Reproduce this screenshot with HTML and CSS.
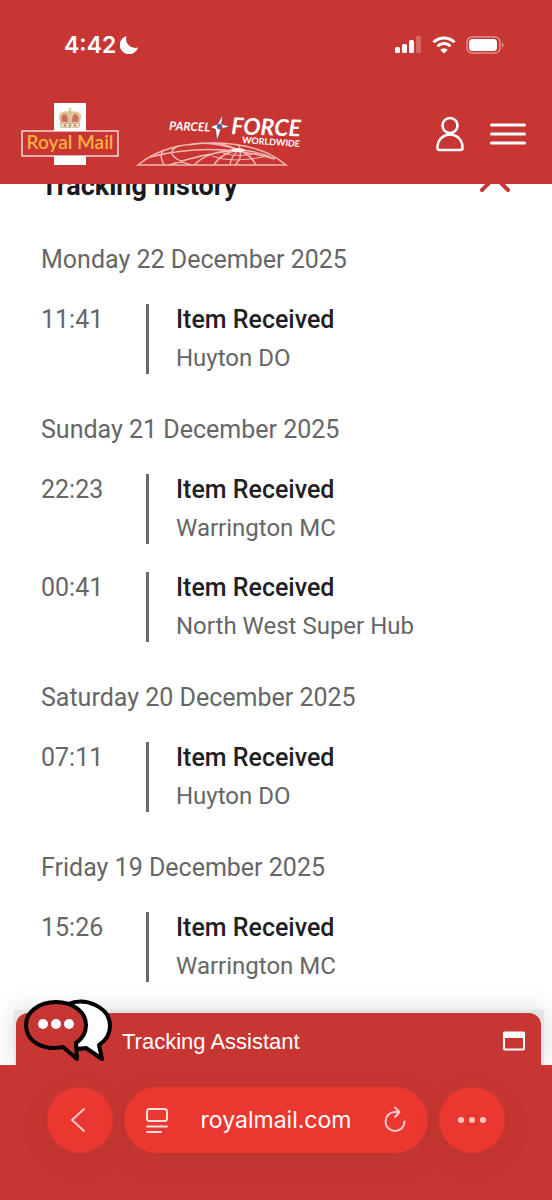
FILE: index.html
```html
<!DOCTYPE html>
<html lang="en">
<head>
    <meta charset="UTF-8">
    <meta name="viewport" content="width=device-width, initial-scale=1.0">
    <title>Royal Mail</title>
    <link rel="stylesheet" href="styles.css">
</head>
<body>
    <div class="status-bar">
        <div class="clock">
            <span>4:42</span>
            <svg width="18" height="18" viewBox="0 0 18 18"><path d="M6.500 0A9.300 9.300 0 1 0 18 11.500C11 13.500 4.500 8 6.500 0z" fill="#fff"/></svg>
        </div>
        <div class="indicators">
            <svg width="27" height="18" viewBox="0 0 27 18" fill="#fff">
                <rect x="0" y="11" width="5" height="6" rx="1.500"/>
                <rect x="7" y="8" width="5" height="9" rx="1.500"/>
                <rect x="14" y="4" width="5" height="13" rx="1.500"/>
                <rect x="21" y="0" width="5" height="17" rx="1.500" opacity=".25"/>
            </svg>
            <svg width="24" height="18" viewBox="0 0 24 18" fill="none" stroke="#fff" stroke-width="3">
                <path d="M1.500 6.200a15 15 0 0 1 21 0"/>
                <path d="M5.500 10.200a9.300 9.300 0 0 1 13 0"/>
                <path d="M12 17.500l-3.700-3.700a5.300 5.300 0 0 1 7.400 0z" fill="#fff" stroke="none"/>
            </svg>
            <svg width="38" height="18" viewBox="0 0 38 18">
                <rect x="1" y="1" width="33" height="16" rx="5" fill="none" stroke="#fff" stroke-width="1.500" opacity=".45"/>
                <rect x="3" y="3" width="28" height="12" rx="3.500" fill="#fff"/>
                <path d="M36 6.500c2 .8 2 4.200 0 5z" fill="#fff" opacity=".5"/>
            </svg>
        </div>
    </div>

    <header class="site-header">
        <a href="#" class="logo" aria-label="Home">
            <svg width="98" height="64" viewBox="0 0 98 64">
                <rect x="33" y="1" width="32" height="62" fill="#fff"/>
                <rect x="1" y="29" width="96" height="25" fill="#c73632" stroke="#fff" stroke-width="1.200"/>
                <g stroke="#c9a67a" stroke-width=".6">
                    <path d="M40 25L38.500 15q-.5-4 4-5 4-1 6.500 1 2.500-2 6.500-1 4.500 1 4 5L58 25z" fill="#e0cb9c"/>
                    <path d="M41 20q-2-8 3-8 3 0 3 8zM57 20q2-8-3-8-3 0-3 8z" fill="#cf6a63"/>
                    <path d="M40 21.500h18v4H40z" fill="#e9e2d3"/>
                    <path d="M49 5v20M47 7h4" fill="none"/>
                    <circle cx="49" cy="10" r="1.500" fill="#e7cf70"/>
                    <circle cx="49" cy="23.500" r="1" fill="#5c9a5a"/>
                    <circle cx="44" cy="23.500" r="1" fill="#c4524c"/>
                    <circle cx="54" cy="23.500" r="1" fill="#c4524c"/>
                </g>
                <text x="49" y="47" class="royal-mail">Royal Mail</text>
            </svg>
        </a>
        <a href="#" class="logo" aria-label="Parcelforce">
            <svg width="176" height="64" viewBox="0 0 176 64">
                <g transform="translate(0 9)">
                    <g fill="none" stroke="#f3b9b5" stroke-width="1.400">
                        <path d="M2 54Q28 32 76 32T150 54z"/>
                        <path d="M14 46Q76 30 139 48M27 39q-4 6 1 15M42 35q-12 6-1 13 6 4 14 6M58 54Q73 39 103 39M99 54q8-7 4-15M120 54q-4-9-17-15M139 48q-16-8-36-9M103 39Q73 29 53 34M103 39Q84 31 76 32M103 39Q105 34 101 34M103 39Q69 42 33 54M103 39q-18 3-25 15M103 39q-8 6-9 15"/>
                        <path d="M76 45q20 8 56 0M87 42q17 5 34 0" stroke-width="1"/>
                    </g>
                    <ellipse cx="102" cy="39" rx="7" ry="2" fill="#fff" opacity=".8"/>
                </g>
                <text x="33" y="28" transform="rotate(2 33 28)" class="parcel">PARCEL</text>
                <text x="95" y="32" transform="rotate(2 95 32)" class="force">FORCE</text>
                <text x="106" y="41" transform="rotate(4 106 41)" class="worldwide">WORLDWIDE</text>
                <g transform="translate(0 9)">
                    <path d="M87 3l-1.500 10 8.500 2.500-9 2.500-4 12-1.500-11.500L74 16l7.500-3z" fill="#fff" stroke="#7b2526" stroke-width=".6"/>
                    <circle cx="83.500" cy="15.500" r="2.800" fill="#4c68a3"/>
                    <path d="M83.500 15.500h3a3 3 0 0 1-3 3z" fill="#c73632"/>
                </g>
            </svg>
        </a>
        <div class="header-actions">
            <button type="button" aria-label="Account">
                <svg width="28" height="36" viewBox="0 0 28 36" fill="none" stroke="#fff" stroke-width="2.600">
                    <circle cx="14" cy="9.500" r="7.500"/>
                    <path d="M1.500 32c0-18 25-18 25 0 0 1.500-.5 2-2 2h-21c-1.500 0-2-.5-2-2z"/>
                </svg>
            </button>
            <button type="button" aria-label="Menu">
                <svg width="36" height="22" viewBox="0 0 36 22" stroke="#fff" stroke-width="3" stroke-linecap="round"><path d="M1.500 2h33M1.500 11h33M1.500 20h33"/></svg>
            </button>
        </div>
    </header>

    <main class="page">
        <div class="history-head">
            <h1>Tracking history</h1>
            <button type="button" aria-label="Collapse">
                <svg width="32" height="24" viewBox="0 0 32 24" fill="none" stroke="#c73632" stroke-width="4" stroke-linecap="round"><path d="M3 16L16 3l13 13"/></svg>
            </button>
        </div>

        <section class="day">
            <h2>Monday 22 December 2025</h2>
            <div class="event">
                <time>11:41</time>
                <div class="detail">
                    <strong>Item Received</strong>
                    <span>Huyton DO</span>
                </div>
            </div>
        </section>

        <section class="day">
            <h2>Sunday 21 December 2025</h2>
            <div class="event">
                <time>22:23</time>
                <div class="detail">
                    <strong>Item Received</strong>
                    <span>Warrington MC</span>
                </div>
            </div>
            <div class="event">
                <time>00:41</time>
                <div class="detail">
                    <strong>Item Received</strong>
                    <span>North West Super Hub</span>
                </div>
            </div>
        </section>

        <section class="day">
            <h2>Saturday 20 December 2025</h2>
            <div class="event">
                <time>07:11</time>
                <div class="detail">
                    <strong>Item Received</strong>
                    <span>Huyton DO</span>
                </div>
            </div>
        </section>

        <section class="day">
            <h2>Friday 19 December 2025</h2>
            <div class="event">
                <time>15:26</time>
                <div class="detail">
                    <strong>Item Received</strong>
                    <span>Warrington MC</span>
                </div>
            </div>
            <div class="event">
                <time></time>
                <div class="detail"></div>
            </div>
        </section>

        <div class="assistant">
            <button type="button" class="assistant-bar">
                <svg class="bubbles" width="88" height="64" viewBox="0 0 88 64" stroke="#000" stroke-width="4" stroke-linejoin="round">
                    <path d="M44 5C62-2 86 8 86 27c0 9-5 15-11 19l3 14-16-11c-5 1-12 1-18 0z" fill="#fff"/>
                    <path d="M32 3c17 0 30 10 30 23 0 8-4 14-10 18l1 16-14-12C18 52 2 42 2 26 2 13 15 3 32 3z" fill="#c73632"/>
                    <g fill="#fff" stroke="none"><circle cx="19" cy="25" r="5"/><circle cx="32" cy="25" r="5"/><circle cx="45" cy="25" r="5"/></g>
                </svg>
                <span>Tracking Assistant</span>
                <svg width="24" height="20" viewBox="0 0 24 20"><rect x="2" y="1.500" width="20" height="17" rx="1" fill="none" stroke="#fff" stroke-width="2"/><path d="M1 1h22v6H1z" fill="#fff"/></svg>
            </button>
        </div>
    </main>

    <nav class="browser-bar">
        <button type="button" class="round" aria-label="Back">
            <svg width="20" height="28" viewBox="0 0 20 28" fill="none" stroke="#ffc9cc" stroke-width="2" stroke-linecap="round"><path d="M14 3L2 14l12 11"/></svg>
        </button>
        <div class="address">
            <button type="button" aria-label="Page menu">
                <svg width="24" height="28" viewBox="0 0 24 28" fill="none" stroke="#ffdedf" stroke-width="2" stroke-linecap="round"><rect x="2" y="3" width="20" height="12" rx="2.500"/><path d="M2 20.500h20M2 26h14"/></svg>
            </button>
            <input type="text" value="royalmail.com" aria-label="Address">
            <button type="button" aria-label="Reload">
                <svg width="24" height="28" viewBox="0 0 24 28" fill="none" stroke="#ffc9cc" stroke-width="2" stroke-linecap="round" stroke-linejoin="round"><path d="M21.500 15.500A9.500 9.500 0 1 1 12 6h4.500M12 1.500L16.500 6 12 11"/></svg>
            </button>
        </div>
        <button type="button" class="round" aria-label="More">
            <svg width="28" height="6" viewBox="0 0 28 6" fill="#ffc9cc"><circle cx="3" cy="3" r="3"/><circle cx="14" cy="3" r="3"/><circle cx="25" cy="3" r="3"/></svg>
        </button>
    </nav>
</body>
</html>
```
FILE: styles.css
```css
* {
    box-sizing: border-box;
}
body {
    margin: 0;
    height: 100vh;
    display: flex;
    flex-direction: column;
    background-color: #fff;
    font-family: Roboto, "Noto Sans", sans-serif;
    color: #666;
}
svg {
    display: block;
    flex: none;
}
button {
    border: none;
    padding: 0;
    background: none;
    font: inherit;
    color: inherit;
    cursor: pointer;
}

/* phone status bar */
.status-bar {
    flex: none;
    display: flex;
    justify-content: space-between;
    align-items: center;
    height: 90px;
    padding: 0 48px 0 64px;
    background-color: #c73632;
    color: #fff;
}
.clock {
    display: flex;
    align-items: center;
    gap: 4px;
    font: 600 23px/28px Inter, sans-serif;
}
.indicators {
    display: flex;
    align-items: center;
    gap: 10px;
}

/* site header */
.site-header {
    flex: none;
    display: flex;
    align-items: center;
    gap: 17px;
    height: 94px;
    padding: 0 26px 6px 21px;
    background-color: #c73632;
}
.royal-mail {
    font: 600 19px Lato, sans-serif;
    fill: #fbb040;
    text-anchor: middle;
}
.parcel,
.force,
.worldwide {
    fill: #fff;
}
.parcel {
    font: italic bold 12px Lato, sans-serif;
}
.force {
    font: italic bold 23px Lato, sans-serif;
}
.worldwide {
    font: bold 9px Lato, sans-serif;
}
.header-actions {
    display: flex;
    align-items: center;
    gap: 26px;
    margin-left: auto;
}

/* tracking history */
.page {
    position: relative;
    flex: 1;
    min-height: 0;
    overflow: hidden;
    padding: 0 41px;
}
.history-head {
    display: flex;
    justify-content: space-between;
    align-items: center;
    height: 32px;
    margin-top: -14px;
}
h1 {
    margin: 0;
    font-size: 27px;
    line-height: 32px;
    font-weight: 700;
    color: #1a1a1e;
}
.day {
    display: flex;
    flex-direction: column;
    gap: 28px;
    margin-top: 40px;
    font-size: 25px;
    line-height: 32px;
}
.history-head + .day {
    margin-top: 42px;
}
h2 {
    margin: 0;
    font-size: 25px;
    line-height: 32px;
    font-weight: 400;
}
.event {
    display: grid;
    grid-template-columns: 105px 1fr;
}
.detail {
    display: flex;
    flex-direction: column;
    gap: 6px;
    min-height: 70px;
    padding-left: 27px;
    border-left: 3px solid #6b6b6b;
    font-size: 24px;
}
.detail strong {
    font-size: 25px;
    font-weight: 500;
    color: #1f1f24;
}

/* chat tab sits over the page */
.assistant {
    position: absolute;
    left: 14px;
    right: 8px;
    bottom: 0;
    padding: 3px 3px 0 2px;
    background-color: #e4e4e4;
    box-shadow: 0 0 24px rgba(0, 0, 0, 0.15);
}
.assistant-bar {
    display: flex;
    align-items: center;
    gap: 10px;
    width: 100%;
    height: 52px;
    padding: 4px 15px 0 8px;
    border-radius: 12px 12px 0 0;
    background-color: #c73632;
    color: #fff;
    font: 22px/28px "Liberation Sans", Arial, sans-serif;
    text-align: left;
}
.assistant-bar span {
    flex: 1;
    padding-top: 2px;
}
.bubbles {
    margin-top: -20px;
}

/* browser toolbar */
.browser-bar {
    flex: none;
    display: flex;
    gap: 11px;
    height: 135px;
    padding: 22px 47px;
    background-color: #c73632;
}
.round,
.address {
    display: flex;
    align-items: center;
    height: 66px;
    border-radius: 33px;
    background-color: #ea3831;
    box-shadow: 0 8px 24px rgba(150, 50, 45, 0.2);
}
.round {
    flex: none;
    justify-content: center;
    width: 66px;
}
.address {
    flex: 1;
    min-width: 0;
    padding: 0 21px;
}
.address input {
    flex: 1;
    min-width: 0;
    padding: 0;
    border: none;
    background: none;
    color: #fff;
    font: 23px/28px Inter, sans-serif;
    text-align: center;
}
```
